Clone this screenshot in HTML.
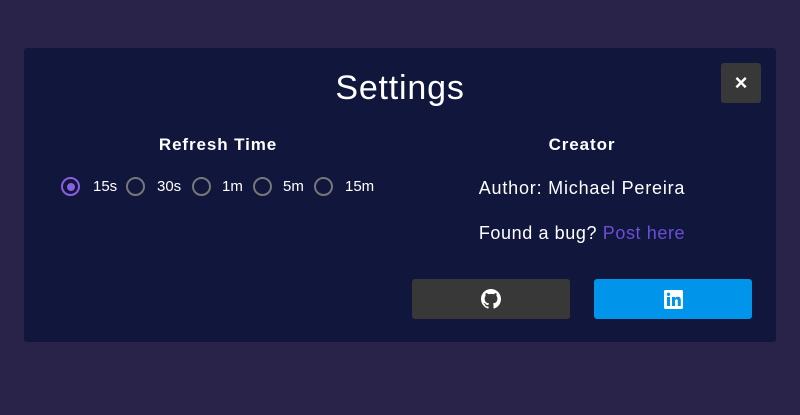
<!DOCTYPE html>
<html><head><style>
body{margin:0;width:800px;height:415px;background:#2a2349;font-family:"Liberation Sans",sans-serif;position:relative;overflow:hidden;color:#fff}
.m{position:absolute;left:24px;top:48px;width:752px;height:294px;background:#10163c;border-radius:3px}
.a{position:absolute;white-space:nowrap}
.c{transform:translateX(-50%)}
.r{position:absolute;top:177px;width:19px;height:19px;border:2px solid #777;border-radius:50%;box-sizing:border-box}
.r.on{border-color:#8a5fe0}
.r.on::after{content:"";position:absolute;left:3.5px;top:3.5px;width:8px;height:8px;border-radius:50%;background:#8a5fe0}
.l{position:absolute;top:178px;font-size:15px;line-height:17px}
.b{position:absolute;top:279px;width:158px;height:40px;border-radius:3px;display:flex;align-items:center;justify-content:center}
</style></head><body>
<div class="m"></div>
<div class="a c" style="left:400px;top:69px;font-size:34px;letter-spacing:0.8px">Settings</div>
<div class="a" style="left:721px;top:63px;width:40px;height:40px;background:#383838;border-radius:3px;text-align:center;line-height:40px;font-size:22px;font-weight:bold">×</div>
<div class="a c" style="left:218px;top:135px;font-size:17px;font-weight:bold;letter-spacing:0.9px">Refresh Time</div>
<div class="a c" style="left:582px;top:135px;font-size:17px;font-weight:bold;letter-spacing:0.9px">Creator</div>
<div class="r on" style="left:61px"></div><div class="l" style="left:93px">15s</div>
<div class="r" style="left:126px"></div><div class="l" style="left:157px">30s</div>
<div class="r" style="left:192px"></div><div class="l" style="left:222px">1m</div>
<div class="r" style="left:253px"></div><div class="l" style="left:283px">5m</div>
<div class="r" style="left:314px"></div><div class="l" style="left:345px">15m</div>
<div class="a c" style="left:582px;top:178px;font-size:18px;letter-spacing:0.8px">Author: Michael Pereira</div>
<div class="a c" style="left:582px;top:223px;font-size:18px;letter-spacing:0.6px">Found a bug? <span style="color:#6a4fd6">Post here</span></div>
<div class="b" style="left:412px;background:#383838"><svg width="20" height="20" viewBox="0 0 16 16"><path fill="#fff" d="M8 0C3.58 0 0 3.58 0 8c0 3.540 2.29 6.53 5.47 7.59.4.07.55-.17.55-.38v-1.33c-2.23.48-2.7-1.07-2.7-1.07-.36-.92-.89-1.170-.89-1.17-.73-.5.06-.49.06-.49.8.06 1.230.83 1.23.83.71 1.23 1.87.87 2.33.66.07-.52.28-.87.51-1.07-1.78-.2-3.64-.89-3.64-3.95 0-.87.31-1.59.82-2.15-.08-.2-.36-1.02.08-2.12 0 0 .67-.21 2.2.82a7.6 7.6 0 0 1 4 0c1.53-1.04 2.2-.82 2.2-.82.44 1.1.16 1.92.08 2.12.51.56.82 1.27.82 2.15 0 3.07-1.87 3.75-3.65 3.95.29.25.54.73.54 1.48v2.2c0 .21.15.46.55.38A8.01 8.01 0 0 0 16 8c0-4.42-3.58-8-8-8z"/></svg></div>
<div class="b" style="left:594px;background:#0095ea"><svg width="19" height="19" viewBox="0 0 19 19"><rect width="19" height="19" rx="1.5" fill="#fff"/><rect x="3" y="7" width="3" height="9" fill="#0095ea"/><circle cx="4.5" cy="4.3" r="1.7" fill="#0095ea"/><path d="M8 7h3v1.3c.5-.9 1.5-1.5 2.8-1.5 2.2 0 3 1.3 3 3.6V16h-3v-5c0-1.1-.3-1.8-1.3-1.8S11 10 11 11.1V16H8z" fill="#0095ea"/></svg></div>
</body></html>
